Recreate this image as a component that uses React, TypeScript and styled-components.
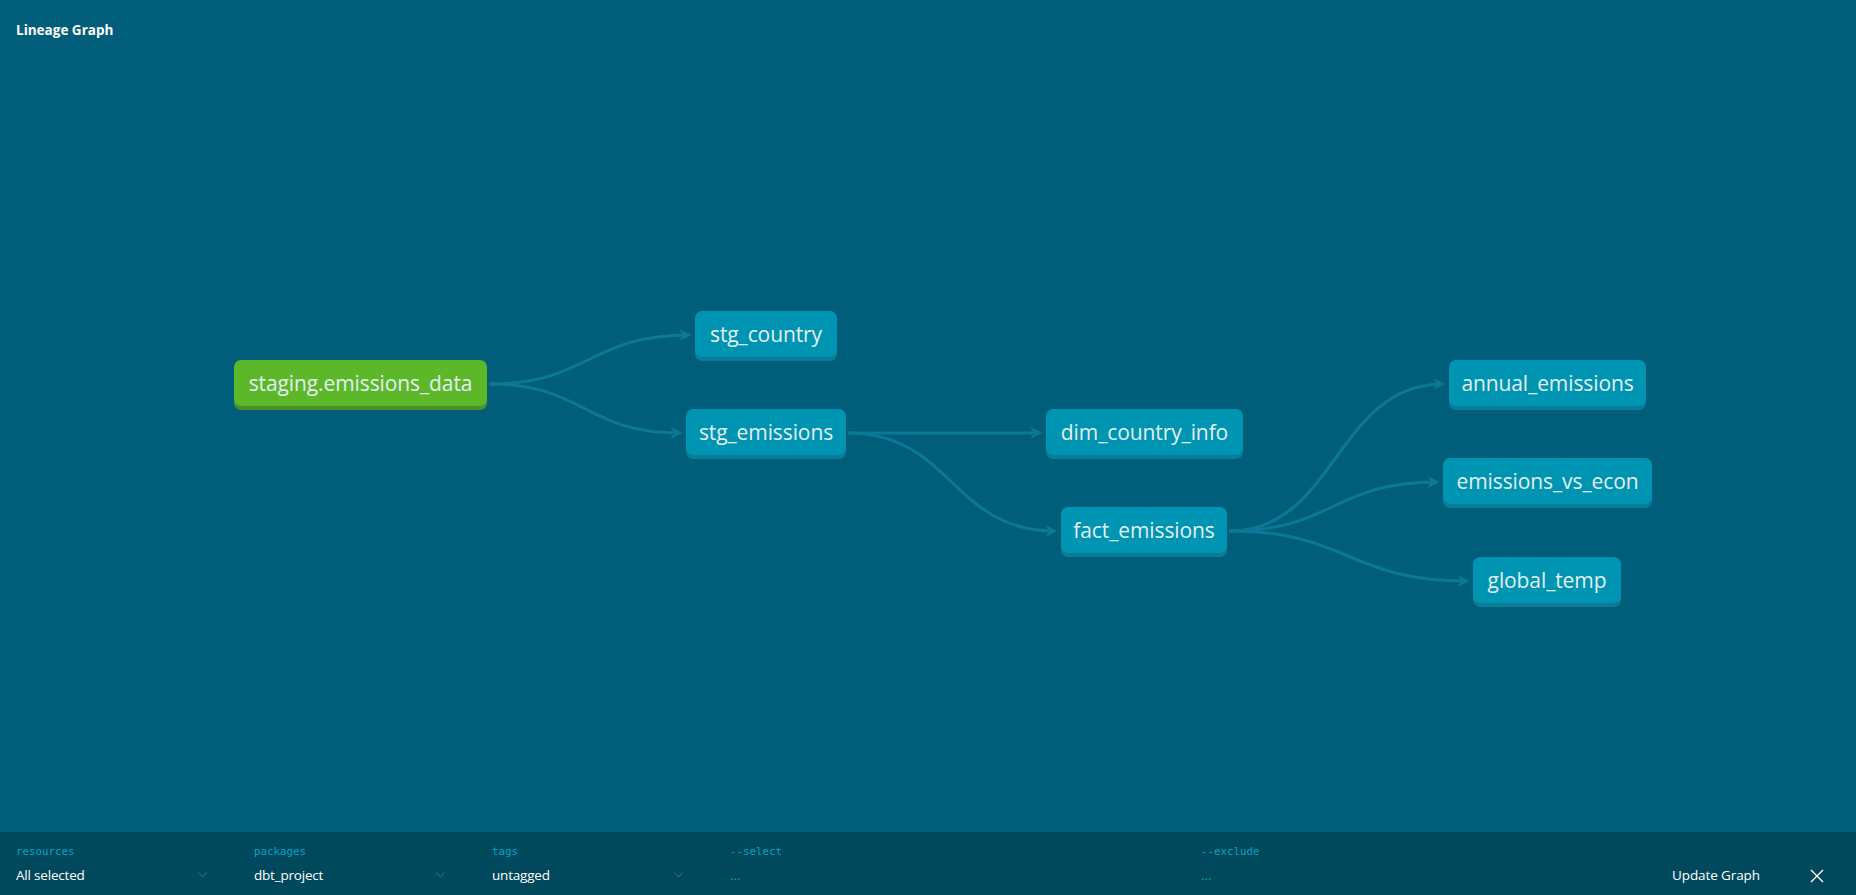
import React from "react";
import styled, { createGlobalStyle } from "styled-components";

const GlobalStyle = createGlobalStyle`
  html, body { margin: 0; padding: 0; height: 100%; }
  body { background: #005e7a; overflow: hidden; }
  #root { height: 100%; }
`;

const Page = styled.div`
  width: 1856px;
  height: 895px;
  display: flex;
  flex-direction: column;
  background: #005e7a;
  font-family: "Open Sans", "Noto Sans", sans-serif;
`;

const Canvas = styled.div`
  position: relative;
  flex: 1;
  padding: 21px 16px 0;
`;

const Title = styled.h1`
  margin: 0;
  font-family: "Open Sans", sans-serif;
  font-weight: 700;
  font-size: 13.5px;
  line-height: 18px;
  color: #ffffff;
  position: relative;
  z-index: 2;
`;

const EdgeLayer = styled.svg`
  position: absolute;
  left: 0;
  top: 0;
  width: 100%;
  height: 100%;
`;

const Node = styled.div<{ $green?: boolean }>`
  position: absolute;
  height: 46px;
  box-sizing: border-box;
  display: flex;
  align-items: center;
  justify-content: center;
  border-radius: 7px;
  background: ${(p) => (p.$green ? "#5db829" : "#0094b3")};
  box-shadow: 0 4px 0 ${(p) => (p.$green ? "#4b902c" : "#0a7c97")};
  color: #e2f0f2;
  font-family: "Open Sans", "Noto Sans", sans-serif;
  font-size: 21px;
  font-weight: 400;
  letter-spacing: -0.1px;
  white-space: nowrap;
`;

const Bar = styled.div`
  height: 63px;
  flex: none;
  background: #00485c;
  display: grid;
  grid-template-columns: 238px 238px 238px 471px 471px auto 1fr;
  align-items: end;
  padding: 0 0 0 16px;
  box-sizing: border-box;
`;

const Filter = styled.div`
  display: flex;
  flex-direction: column;
  gap: 7px;
  padding-top: 11px;
  padding-bottom: 10px;
`;

const Label = styled.div`
  font-family: "DejaVu Sans Mono", "Liberation Mono", monospace;
  font-size: 10.8px;
  line-height: 13px;
  color: #00a5c6;
`;

const SelectRow = styled.div`
  width: 191px;
  height: 20px;
  display: flex;
  align-items: center;
  justify-content: space-between;
`;

const Value = styled.span<{ $muted?: boolean }>`
  font-family: "Open Sans", sans-serif;
  font-size: 13.5px;
  line-height: 20px;
  color: ${(p) => (p.$muted ? "#00a5c6" : "#ffffff")};
  letter-spacing: -0.2px;
`;

const Chevron = styled.svg`
  width: 9px;
  height: 6px;
`;

const UpdateButton = styled.button`
  background: none;
  border: none;
  padding: 0;
  margin-bottom: 10px;
  font-family: "Open Sans", sans-serif;
  font-size: 13.5px;
  line-height: 20px;
  color: #ffffff;
  cursor: pointer;
  white-space: nowrap;
  letter-spacing: -0.1px;
`;

const CloseButton = styled.button`
  justify-self: end;
  background: none;
  border: none;
  padding: 0;
  margin: 0 32px 12px 0;
  width: 14px;
  height: 14px;
  display: flex;
  cursor: pointer;
`;

type N = { id: string; label: string; x: number; y: number; w: number; green?: boolean };

const nodes: N[] = [
  { id: "src", label: "staging.emissions_data", x: 234, y: 360, w: 253, green: true },
  { id: "sc", label: "stg_country", x: 695, y: 311, w: 142 },
  { id: "se", label: "stg_emissions", x: 686, y: 409, w: 160 },
  { id: "dim", label: "dim_country_info", x: 1046, y: 409, w: 197 },
  { id: "fact", label: "fact_emissions", x: 1061, y: 507, w: 166 },
  { id: "ann", label: "annual_emissions", x: 1449, y: 360, w: 197 },
  { id: "econ", label: "emissions_vs_econ", x: 1443, y: 458, w: 209 },
  { id: "glob", label: "global_temp", x: 1473, y: 557, w: 148 },
];

const edges: [string, string][] = [
  ["src", "sc"],
  ["src", "se"],
  ["se", "dim"],
  ["se", "fact"],
  ["fact", "ann"],
  ["fact", "econ"],
  ["fact", "glob"],
];

const byId = Object.fromEntries(nodes.map((n) => [n.id, n]));

function edgePath(a: N, b: N) {
  const x1 = a.x + a.w + 2;
  const y1 = a.y + 24;
  const x2 = b.x - 6;
  const y2 = b.y + 24;
  const mx = (x1 + x2) / 2;
  return `M${x1},${y1} C${mx},${y1} ${mx},${y2} ${x2},${y2}`;
}

const filters = [
  { label: "resources", value: "All selected" },
  { label: "packages", value: "dbt_project" },
  { label: "tags", value: "untagged" },
];

export default function App() {
  return (
    <>
      <GlobalStyle />
      <Page>
        <Canvas>
          <Title>Lineage Graph</Title>
          <EdgeLayer>
            <defs>
              <marker
                id="arrow"
                viewBox="0 0 10 10"
                refX="8"
                refY="5"
                markerWidth="4"
                markerHeight="4"
                orient="auto"
                markerUnits="strokeWidth"
              >
                <path d="M0,0 L10,5 L0,10 L3,5 Z" fill="#0b7896" />
              </marker>
            </defs>
            {edges.map(([s, t]) => (
              <path
                key={s + t}
                d={edgePath(byId[s], byId[t])}
                fill="none"
                stroke="#0b7896"
                strokeWidth={3}
                markerEnd="url(#arrow)"
              />
            ))}
          </EdgeLayer>
          {nodes.map((n) => (
            <Node key={n.id} $green={n.green} style={{ left: n.x, top: n.y, width: n.w }}>
              {n.label}
            </Node>
          ))}
        </Canvas>
        <Bar>
          {filters.map((f) => (
            <Filter key={f.label}>
              <Label>{f.label}</Label>
              <SelectRow>
                <Value>{f.value}</Value>
                <Chevron viewBox="0 0 9 6">
                  <polyline points="0.5,0.5 4.5,5 8.5,0.5" fill="none" stroke="#0a86a4" strokeWidth="1" />
                </Chevron>
              </SelectRow>
            </Filter>
          ))}
          <Filter>
            <Label>--select</Label>
            <SelectRow>
              <Value $muted>…</Value>
            </SelectRow>
          </Filter>
          <Filter>
            <Label>--exclude</Label>
            <SelectRow>
              <Value $muted>…</Value>
            </SelectRow>
          </Filter>
          <UpdateButton>Update Graph</UpdateButton>
          <CloseButton aria-label="close">
            <svg width="14" height="14" viewBox="0 0 14 14">
              <path d="M1,1 L13,13 M13,1 L1,13" stroke="#ffffff" strokeWidth="1.4" fill="none" />
            </svg>
          </CloseButton>
        </Bar>
      </Page>
    </>
  );
}
